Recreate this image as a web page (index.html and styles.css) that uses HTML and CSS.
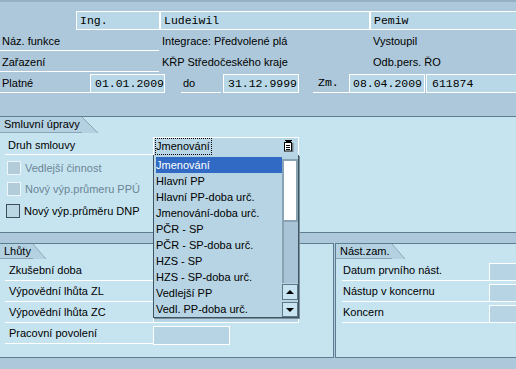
FILE: index.html
```html
<!DOCTYPE html>
<html lang="cs">
<head>
  <meta charset="UTF-8">
  <title>Smluvní úpravy</title>
  <link rel="stylesheet" href="styles.css">
</head>
<body>
  <div class="header">
    <div class="hrow">
      <div class="field f-title">Ing.</div>
      <div class="field f-name">Ludeiwil</div>
      <div class="field f-last">Pemiw</div>
    </div>
    <div class="hrow">
      <div class="label l-wide">Náz. funkce</div>
      <div class="hval">Integrace: Předvolené plá</div>
      <div class="hval hval-last">Vystoupil</div>
    </div>
    <div class="hrow">
      <div class="label l-wide">Zařazení</div>
      <div class="hval">KŘP Středočeského kraje</div>
      <div class="hval hval-last">Odb.pers. ŘO</div>
    </div>
    <div class="hrow">
      <div class="label l-valid">Platné</div>
      <div class="field f-from">01.01.2009</div>
      <div class="label l-to">do</div>
      <div class="field f-to">31.12.9999</div>
      <div class="label l-chg">Zm.</div>
      <div class="field f-chg">08.04.2009</div>
      <div class="field f-user">611874</div>
    </div>
  </div>

  <div class="panel upper">
    <div class="tab">Smluvní úpravy</div>
    <div class="prow first">
      <div class="plabel">Druh smlouvy</div>
      <div class="combo">
        <span class="focus">Jmenování</span>
        <svg class="combo-icon" width="10" height="12" viewBox="0 0 10 12">
          <rect x="1" y="0" width="7" height="1" fill="#000"/>
          <rect x="2" y="1" width="5" height="2" fill="#000"/>
          <rect x="8" y="3" width="1.5" height="9" fill="#6d7f8a"/>
          <rect x="0.5" y="2.5" width="7" height="8.5" fill="#fff" stroke="#000"/>
          <rect x="2" y="5" width="4" height="1" fill="#000"/>
          <rect x="2" y="7" width="4" height="1" fill="#000"/>
          <rect x="2" y="9" width="4" height="1" fill="#000"/>
        </svg>
      </div>
    </div>
    <div class="cbrow disabled"><span class="cb"></span>Vedlejší činnost</div>
    <div class="cbrow disabled"><span class="cb"></span>Nový výp.průmeru PPÚ</div>
    <div class="cbrow active"><span class="cb"></span>Nový výp.průměru DNP</div>
  </div>

  <div class="lower">
    <div class="panel lpanel">
      <div class="tab tab-small">Lhůty</div>
      <div class="prow first">
        <div class="plabel">Zkušební doba</div>
        <div class="pfield pf-long"></div>
      </div>
      <div class="prow">
        <div class="plabel">Výpovědní lhůta ZL</div>
        <div class="pfield pf-long"></div>
      </div>
      <div class="prow">
        <div class="plabel">Výpovědní lhůta ZC</div>
        <div class="pfield pf-long"></div>
      </div>
      <div class="prow">
        <div class="plabel">Pracovní povolení</div>
        <div class="pfield pf-short"></div>
      </div>
    </div>
    <div class="panel rpanel">
      <div class="tab tab-small">Nást.zam.</div>
      <div class="prow first">
        <div class="plabel">Datum prvního nást.</div>
        <div class="pfield pf-edge"></div>
      </div>
      <div class="prow">
        <div class="plabel">Nástup v koncernu</div>
        <div class="pfield pf-edge"></div>
      </div>
      <div class="prow">
        <div class="plabel">Koncern</div>
        <div class="pfield pf-edge"></div>
      </div>
    </div>
  </div>

  <!-- otevřený seznam hodnot pro Druh smlouvy -->
  <div class="dropdown">
    <ul class="items">
      <li class="selected">Jmenování</li>
      <li>Hlavní PP</li>
      <li>Hlavní PP-doba urč.</li>
      <li>Jmenování-doba urč.</li>
      <li>PČR - SP</li>
      <li>PČR - SP-doba urč.</li>
      <li>HZS - SP</li>
      <li>HZS - SP-doba urč.</li>
      <li>Vedlejší PP</li>
      <li>Vedl. PP-doba urč.</li>
    </ul>
    <div class="scrollbar">
      <div class="thumb"></div>
      <div class="track"></div>
      <div class="sbtn"><span class="arrow-up"></span></div>
      <div class="sbtn down"><span class="arrow-down"></span></div>
    </div>
  </div>
</body>
</html>
```

FILE: styles.css
```css
/* SAP GUI - světle modrý motiv */
body {
  margin: 0;
  width: 516px;
  height: 369px;
  overflow: hidden;
  position: relative;
  background: #adc8da;
  font-family: "Liberation Sans", Arial, sans-serif;
  font-size: 11px;
  color: #000;
}

/* hlavička */
.header {
  border-top: 2px solid #93b0c4;
  padding: 8px 0 22px;
}
.hrow {
  display: flex;
  height: 21px;
}
.field {
  box-sizing: border-box;
  height: 19px;
  margin-top: 1px;
  border: 1px solid #fff;
  background: #b9d8e7;
  font-family: "Liberation Mono", monospace;
  font-size: 11.5px;
  line-height: 17px;
  padding-left: 3px;
  white-space: nowrap;
  overflow: hidden;
  flex-shrink: 0;
}
.label {
  box-sizing: border-box;
  height: 20px;
  line-height: 20px;
  border-bottom: 1px solid #fff;
  padding-left: 2px;
  flex-shrink: 0;
}
.hval {
  box-sizing: border-box;
  width: 211px;
  padding-left: 3px;
  line-height: 21px;
  flex-shrink: 0;
}
.hval-last { width: 146px; }
.f-title { margin-left: 76px; width: 84px; }
.f-name { width: 210px; }
.f-last { width: 146px; border-right: none; }
.l-wide { width: 159px; }
.l-valid { width: 90px; }
.f-from { width: 75px; padding-left: 4px; }
.l-to { margin-left: 16px; width: 40px; }
.f-to { margin-left: 2px; width: 76px; padding-left: 4px; }
.l-chg {
  margin-left: 14px;
  width: 36px;
  padding-left: 5px;
  font-family: "Liberation Mono", monospace;
  font-size: 11.5px;
}
.f-chg { width: 76px; }
.f-user { margin-left: 1px; width: 90px; padding-left: 5px; border-right: none; }

/* panely */
.panel {
  background: #c6e4f0;
  border-top: 1px solid #5d7e91;
  border-bottom: 1px solid #5d7e91;
}
.upper {
  height: 115px;
}
.tab {
  position: relative;
  width: fit-content;
  height: 15px;
  line-height: 15px;
  padding: 0 2px 0 4px;
  background: #b3d1e1;
  border-bottom: 1px solid #8aa6b6;
}
.tab::after {
  content: "";
  position: absolute;
  left: 100%;
  top: 0;
  width: 16px;
  height: 16px;
  background: linear-gradient(to top right, #b3d1e1 calc(50% - 0.7px), #8aa6b6 50%, transparent calc(50% + 0.7px));
}
.tab-small {
  height: 14px;
  line-height: 14px;
}
.tab-small::after {
  width: 13px;
  height: 15px;
}
.prow {
  display: flex;
  height: 21px;
}
.upper .prow.first {
  margin-top: 2px;
}
.plabel {
  box-sizing: border-box;
  margin-left: 5px;
  width: 148px;
  height: 20px;
  line-height: 20px;
  padding-left: 3px;
  border-bottom: 1px solid #fff;
  flex-shrink: 0;
}
.combo {
  box-sizing: border-box;
  position: relative;
  margin-top: 2px;
  width: 146px;
  height: 19px;
  border: 1px solid #fff;
  border-bottom: none;
  background: #b8d6e5;
  padding-left: 1px;
}
.focus {
  display: inline-block;
  height: 15px;
  line-height: 15px;
  border: 1px dotted #000;
  padding: 0 1px 0 0;
}
.combo-icon {
  position: absolute;
  right: 4px;
  top: 2px;
}

/* zaškrtávací pole */
.cbrow {
  display: flex;
  align-items: center;
  gap: 4px;
  height: 21px;
  padding-left: 7px;
}
.upper .prow + .cbrow {
  margin-top: 1px;
}
.cb {
  box-sizing: border-box;
  width: 14px;
  height: 14px;
  flex-shrink: 0;
}
.disabled {
  color: #6b8595;
}
.disabled .cb {
  border: 1px solid #eef6fa;
  background: #b2ccda;
}
.active {
  padding-left: 6px;
  margin-top: 1px;
}
.active .cb {
  border: 1px solid #3f4f58;
  background: #bcd7e4;
}

/* spodní panely */
.lower {
  display: flex;
  gap: 1px;
  margin-top: 10px;
}
.lower .panel {
  height: 113px;
}
.lpanel {
  width: 333px;
  flex-shrink: 0;
  border-right: 1px solid #5d7e91;
}
.rpanel {
  flex: 1;
  min-width: 0;
  overflow: hidden;
  border-left: 1px solid #5d7e91;
}
.lower .prow.first {
  margin-top: 1px;
}
.lower .plabel {
  height: 21px;
  line-height: 21px;
  padding-left: 4px;
}
.rpanel .plabel {
  margin-left: 6px;
  width: 147px;
  padding-left: 1px;
}
.pfield {
  box-sizing: border-box;
  margin-top: 3px;
  height: 18px;
  border: 1px solid #fff;
  background: #b6d4e3;
  flex-shrink: 0;
}
.pf-long { width: 146px; }
.pf-short { width: 77px; height: 19px; }
.pf-edge { width: 27px; border-right: none; }

/* rozbalený seznam */
.dropdown {
  position: absolute;
  left: 153px;
  top: 155px;
  box-sizing: border-box;
  width: 146px;
  height: 163px;
  display: flex;
  background: #b6d4e3;
  border-left: 1px solid #3e5566;
  border-right: 1px solid #3e5566;
  border-bottom: 1px solid #3e5566;
  box-shadow: 1px 1px 0 #7c909c;
}
.items {
  list-style: none;
  margin: 0;
  padding: 2px 0 0 2px;
  width: 128px;
  box-sizing: border-box;
}
.items li {
  height: 16px;
  line-height: 16px;
  white-space: nowrap;
}
.items li.selected {
  background: #316ac5;
  color: #fff;
}
.scrollbar {
  display: flex;
  flex-direction: column;
  width: 16px;
  padding-top: 2px;
}
.thumb {
  box-sizing: border-box;
  margin-top: 2px;
  height: 63px;
  background: #fff;
  border: 2px solid #8aa3b3;
}
.track {
  height: 61px;
  background: #a8c4d6;
  border-left: 2px solid #8aa3b3;
  box-sizing: border-box;
}
.sbtn {
  box-sizing: border-box;
  margin-top: 1px;
  height: 16px;
  border: 1px solid #5f7888;
  background: #c8e4f0;
  display: flex;
  align-items: center;
  justify-content: center;
}
.sbtn.down {
  margin-top: 2px;
  height: 15px;
}
.arrow-up {
  width: 0;
  height: 0;
  border-left: 4px solid transparent;
  border-right: 4px solid transparent;
  border-bottom: 4px solid #000;
}
.arrow-down {
  width: 0;
  height: 0;
  border-left: 4px solid transparent;
  border-right: 4px solid transparent;
  border-top: 4px solid #000;
}
```
